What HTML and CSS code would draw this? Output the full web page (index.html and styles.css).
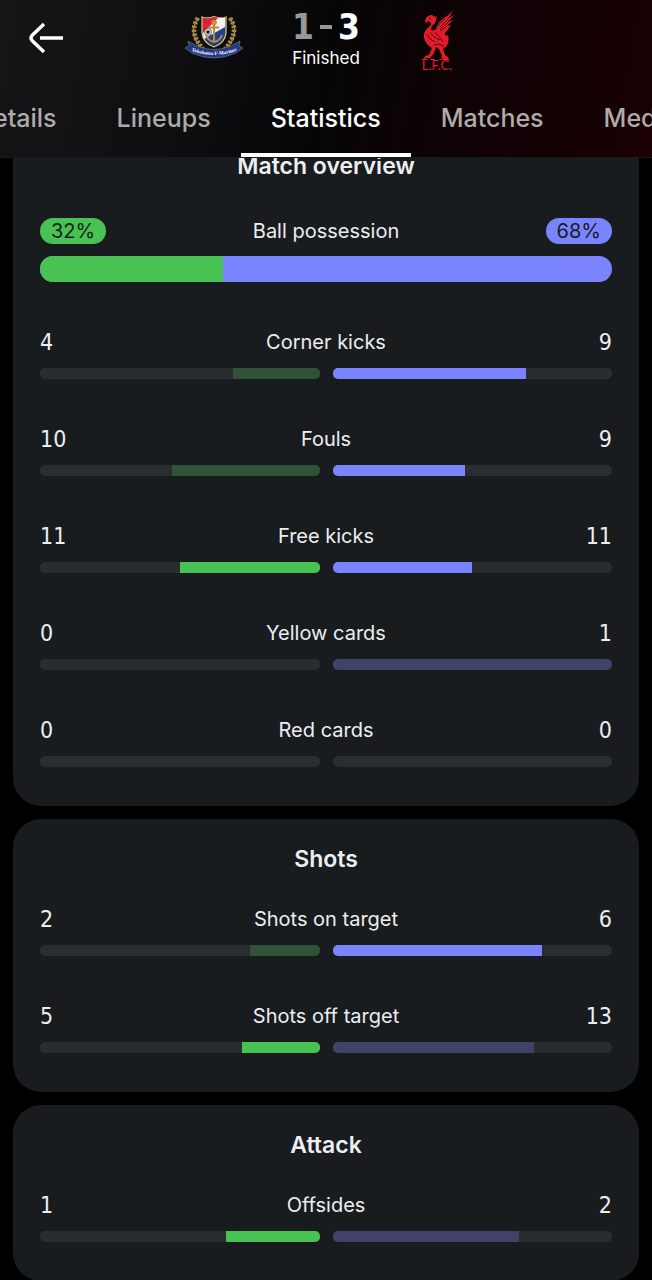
FILE: index.html
```html
<!DOCTYPE html>
<html lang="en">

<head>
    <meta charset="UTF-8">
    <meta name="viewport" content="width=device-width, initial-scale=1.0">
    <title>Match statistics</title>
    <link rel="stylesheet" href="styles.css">
</head>

<body>
    <header class="header">
        <div class="match">
            <button class="back" aria-label="Back">
                <svg width="36" height="32" viewBox="0 0 36 32" fill="none" stroke="#fff" stroke-width="3.4">
                    <path d="M16 2 L4 13.5 Q2 16 4 18.5 L16 30 M12 16 H35" />
                </svg>
            </button>
            <div class="team">
                <svg width="60" height="46" viewBox="0 0 60 46" role="img" aria-label="Yokohama F. Marinos">
                    <!-- laurel -->
                    <g fill="none" stroke="#a98a3d" stroke-width="1.2">
                        <path d="M15 3 Q2 17 19 35" />
                        <path d="M45 3 Q58 17 41 35" />
                    </g>
                    <g fill="none" stroke="#a98a3d" stroke-width="4.6" stroke-dasharray="2.6 1.5">
                        <path d="M14 3 Q4 17 19 34" />
                        <path d="M46 3 Q56 17 41 34" />
                    </g>
                    <!-- shield -->
                    <path d="M18 2 Q24 4 30 1.500 Q36 4 42 2 V18 Q41 28 30 32 Q19 28 18 18 Z" fill="#203f91" stroke="#d8c073" stroke-width="1.3" />
                    <path d="M19 3 Q25 4.500 30 2.500 L41 3 L19 20 Z" fill="#e3202c" />
                    <path d="M41 3 V12 L20 24 Q19 21 19 18 L34 3 Z" fill="#f4f1f0" />
                    <g fill="none" stroke="#b98a38" stroke-width="2">
                        <circle cx="30" cy="7.500" r="1.800" />
                        <path d="M30 9 V27 M25 12.500 H35 M22 20 Q24 26 30 27 Q36 26 38 20" />
                    </g>
                    <circle cx="24" cy="17" r="3.400" fill="#fff" stroke="#222" stroke-width="0.700" />
                    <path d="M24 15 l2 1.500 l-0.800 2.200 h-2.400 l-0.800 -2.200 Z" fill="#222" />
                    <!-- ribbon -->
                    <path d="M4 26 L13 31 Q30 38 47 31 L56 26 L55 31 L59 33 L52 38 Q30 48 8 38 L1 33 L5 31 Z" fill="#1f398f" stroke="#8d8250" stroke-width="0.600" />
                    <path id="ribbon" d="M3 34 Q30 46 57 34" fill="none" />
                    <text class="ribbon-text"><textPath href="#ribbon" startOffset="50%">Yokohama F·Marinos</textPath></text>
                </svg>
            </div>
            <div class="result">
                <div class="score"><span class="lost">1</span><span class="dash"></span><span>3</span></div>
                <div class="status">Finished</div>
            </div>
            <div class="team">
                <svg width="38" height="68" viewBox="0 0 38 68" role="img" aria-label="Liverpool">
                    <!-- liver bird -->
                    <g fill="#e31b2b">
                        <path d="M35 4 Q32 10 25 14 Q18 18 17 26 L20 31 Q28 28 32 21 L28 22 L34 16 L29 18 L35 11 L30 14 Z" />
                        <path d="M20 31 Q28 30 30 23 L23 26 Z" />
                        <path d="M6 16 Q8 11 13 11 L16 13 L18 12 L17 16 Q17 19 14 21 Q11 24 13 27 Q17 24 20 27 Q29 29 29 38 Q28 43 24 44 L26 51 L30 54 L28 56 L22 54 L23 52 L20 45 L17 43 L15 49 L11 54 L7 54 L4 56 L6 52 L10 51 L13 44 Q7 41 5 34 Q4 27 10 23 Q14 20 11 18 L9 17 L7 20 Z" />
                        <path d="M29 31 Q31 39 26 44 L24 43 Q29 38 26 33 Z" />
                    </g>
                    <g fill="none" stroke="#0b0305" stroke-width="0.700">
                        <path d="M21 23 Q28 17 33 10 M21 25 Q27 21 32 15 M21 27 Q27 24 31 19 M19 22 Q21 18 26 15" />
                        <path d="M8 30 Q10 36 16 38 M11 28 Q13 33 21 36 M16 28 Q21 33 24 38 M15 41 L20 40 L25 42 M10 14 L12 15" />
                    </g>
                    <path d="M3 55.500 H9 M11 55.500 H16 M21 55.500 H30" stroke="#e31b2b" stroke-width="1" />
                    <text class="lfc" x="18" y="66">L.F.C.</text>
                </svg>
            </div>
        </div>
        <nav class="tabs">
            <a class="tab" href="#details">Details</a>
            <a class="tab" href="#lineups">Lineups</a>
            <a class="tab active" href="#statistics" aria-current="page">Statistics</a>
            <a class="tab" href="#matches">Matches</a>
            <a class="tab" href="#media">Media</a>
        </nav>
    </header>

    <main class="cards">
        <!-- Match overview -->
        <section class="card">
            <h2>Match overview</h2>
            <div class="stats">
                <div class="possession">
                    <div class="possession-head">
                        <span class="pill home">32%</span>
                        <span class="label">Ball possession</span>
                        <span class="pill away">68%</span>
                    </div>
                    <div class="possession-bar"><div class="fill" style="width: 32%"></div></div>
                </div>
                <div class="stat">
                    <div class="stat-head"><span class="value">4</span><span class="label">Corner kicks</span><span class="value">9</span></div>
                    <div class="bars">
                        <div class="bar home dim"><div class="fill" style="width: 30.8%"></div></div>
                        <div class="bar away"><div class="fill" style="width: 69.2%"></div></div>
                    </div>
                </div>
                <div class="stat">
                    <div class="stat-head"><span class="value">10</span><span class="label">Fouls</span><span class="value">9</span></div>
                    <div class="bars">
                        <div class="bar home dim"><div class="fill" style="width: 52.6%"></div></div>
                        <div class="bar away"><div class="fill" style="width: 47.4%"></div></div>
                    </div>
                </div>
                <div class="stat">
                    <div class="stat-head"><span class="value">11</span><span class="label">Free kicks</span><span class="value">11</span></div>
                    <div class="bars">
                        <div class="bar home"><div class="fill" style="width: 50%"></div></div>
                        <div class="bar away"><div class="fill" style="width: 50%"></div></div>
                    </div>
                </div>
                <div class="stat">
                    <div class="stat-head"><span class="value">0</span><span class="label">Yellow cards</span><span class="value">1</span></div>
                    <div class="bars">
                        <div class="bar home"><div class="fill" style="width: 0%"></div></div>
                        <div class="bar away dim"><div class="fill" style="width: 100%"></div></div>
                    </div>
                </div>
                <div class="stat">
                    <div class="stat-head"><span class="value">0</span><span class="label">Red cards</span><span class="value">0</span></div>
                    <div class="bars">
                        <div class="bar home"><div class="fill" style="width: 0%"></div></div>
                        <div class="bar away"><div class="fill" style="width: 0%"></div></div>
                    </div>
                </div>
            </div>
        </section>

        <!-- Shots -->
        <section class="card">
            <h2>Shots</h2>
            <div class="stats">
                <div class="stat">
                    <div class="stat-head"><span class="value">2</span><span class="label">Shots on target</span><span class="value">6</span></div>
                    <div class="bars">
                        <div class="bar home dim"><div class="fill" style="width: 25%"></div></div>
                        <div class="bar away"><div class="fill" style="width: 75%"></div></div>
                    </div>
                </div>
                <div class="stat">
                    <div class="stat-head"><span class="value">5</span><span class="label">Shots off target</span><span class="value">13</span></div>
                    <div class="bars">
                        <div class="bar home"><div class="fill" style="width: 27.8%"></div></div>
                        <div class="bar away dim"><div class="fill" style="width: 72.2%"></div></div>
                    </div>
                </div>
            </div>
        </section>

        <!-- Attack -->
        <section class="card">
            <h2>Attack</h2>
            <div class="stats">
                <div class="stat">
                    <div class="stat-head"><span class="value">1</span><span class="label">Offsides</span><span class="value">2</span></div>
                    <div class="bars">
                        <div class="bar home"><div class="fill" style="width: 33.3%"></div></div>
                        <div class="bar away dim"><div class="fill" style="width: 66.7%"></div></div>
                    </div>
                </div>
            </div>
        </section>
    </main>
</body>

</html>
```
FILE: styles.css
```css
html {
    scrollbar-width: none;
}

body {
    font-family: Inter, "Open Sans", sans-serif;
    background-color: #000;
    color: #eceef0;
    margin: 0;
    overflow-x: hidden;
}

/* Header */
.header {
    position: sticky;
    top: 0;
    z-index: 1;
    background: linear-gradient(100deg, #151518 0%, #0f0f12 28%, #060506 50%, #0c0204 65%, #1a0003 100%);
}

.match {
    display: grid;
    grid-template-columns: 1fr 112px 112px 112px 1fr;
    align-items: center;
    height: 76px;
}

.back {
    display: flex;
    justify-self: start;
    margin-left: 28px;
    padding: 0;
    border: none;
    background: none;
    cursor: pointer;
}

.team {
    display: flex;
    justify-content: center;
}

.ribbon-text {
    font-family: "Liberation Serif", serif;
    font-size: 5px;
    font-weight: bold;
    fill: #fff;
    text-anchor: middle;
}

.lfc {
    font-family: Lato, sans-serif;
    font-size: 13px;
    fill: #e31b2b;
    text-anchor: middle;
}

.result {
    padding-top: 4px;
    text-align: center;
}

.score {
    display: flex;
    justify-content: center;
    align-items: center;
    gap: 6px;
    font-family: "DejaVu Sans Condensed", "DejaVu Sans", sans-serif;
    font-size: 35px;
    line-height: 36px;
    font-weight: bold;
    color: #fff;
}

.lost {
    color: #98989a;
}

.dash {
    width: 12px;
    height: 4px;
    background-color: #98989a;
}

.status {
    font-size: 17px;
    line-height: 26px;
    color: #fff;
}

.tabs {
    display: flex;
    justify-content: center;
    overflow: hidden;
    border-bottom: 1px solid #171a1c;
}

.tab {
    flex: none;
    padding: 24px 30px 17px;
    border-bottom: 4px solid transparent;
    color: #aeabab;
    font-size: 25px;
    line-height: 36px;
    font-weight: 500;
    text-decoration: none;
}

.tab.active {
    color: #fff;
    border-color: #fff;
}

/* Cards */
.cards {
    display: flex;
    flex-direction: column;
    gap: 13px;
    padding: 0 13px;
    margin-top: -32px;
}

.card {
    background-color: #181c1f;
    border-radius: 28px;
    padding: 24px 27px 39px;
}

h2 {
    margin: 0 0 28px;
    font-size: 23px;
    line-height: 32px;
    font-weight: 600;
    text-align: center;
}

.stats {
    display: flex;
    flex-direction: column;
    gap: 44px;
}

.stat-head,
.possession-head {
    display: grid;
    grid-template-columns: 1fr auto 1fr;
    align-items: center;
    height: 32px;
    margin-bottom: 10px;
}

.stat-head :last-child,
.possession-head :last-child {
    justify-self: end;
}

.label {
    font-size: 20px;
    line-height: 26px;
}

.value {
    font-family: "DejaVu Sans Condensed", "DejaVu Sans", sans-serif;
    font-size: 23px;
    line-height: 32px;
}

/* Ball possession */
.possession {
    margin-top: 8px;
}

.possession-head {
    height: 26px;
    margin-bottom: 12px;
}

.pill {
    justify-self: start;
    padding: 0 11px;
    border-radius: 13px;
    color: #181c1f;
    font-size: 20px;
    line-height: 26px;
}

.pill.home,
.possession-bar .fill {
    background-color: #48c353;
}

.pill.away,
.possession-bar {
    background-color: #7b84ff;
}

.possession-bar {
    height: 26px;
    border-radius: 13px;
    overflow: hidden;
}

.fill {
    height: 100%;
}

/* Comparison bars */
.bars {
    display: grid;
    grid-template-columns: 1fr 1fr;
    gap: 13px;
}

.bar {
    display: flex;
    height: 11px;
    border-radius: 5px;
    background-color: #2a2d30;
    overflow: hidden;
}

.bar.home {
    justify-content: flex-end;
}

.bar.home .fill {
    background-color: #48c353;
}

.bar.away .fill {
    background-color: #7b84ff;
}

.bar.home.dim .fill {
    background-color: #305239;
}

.bar.away.dim .fill {
    background-color: #41426a;
}
```
